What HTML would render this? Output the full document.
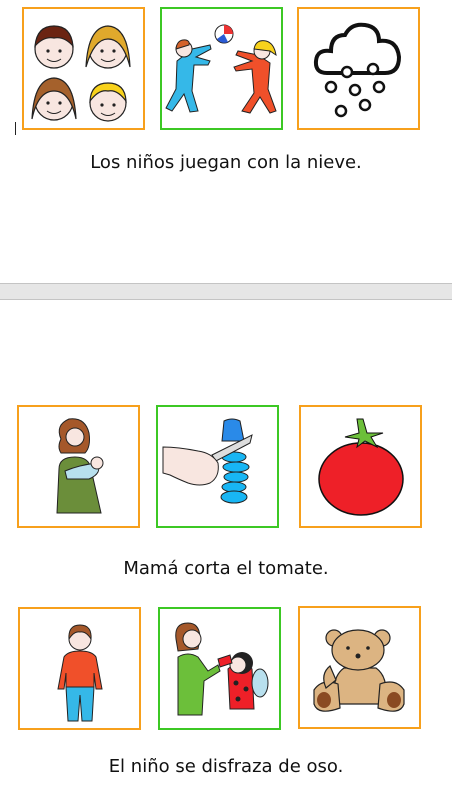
<!DOCTYPE html>
<html><head><meta charset="utf-8"><style>
*{margin:0;padding:0;box-sizing:border-box}
body{width:452px;height:798px;background:#fff;position:relative;overflow:hidden;font-family:"DejaVu Sans","Liberation Sans",sans-serif;color:#111}
.b{position:absolute;width:123px;height:123px;border:2px solid #f7a01c;background:#fff}
.g{border-color:#3cc824}
.b svg{position:absolute;left:0;top:0;width:119px;height:119px}
.t{position:absolute;left:0;width:452px;text-align:center;font-size:18px;line-height:20px}
.band{position:absolute;left:0;top:283px;width:452px;height:17px;background:#e6e6e6;border-top:1px solid #c4c4c4;border-bottom:1px solid #c4c4c4}
</style></head><body>

<div class="b" style="left:22px;top:7px"><svg viewBox="0 0 119 119">
<g stroke="#222" stroke-width="1.2">
<circle cx="30" cy="40" r="19" fill="#f8e6e0"/><path d="M11 37 Q13 17 30 17 Q47 17 49 37 Q40 27 30 29 Q20 27 11 37Z" fill="#6b2412"/>
<circle cx="84" cy="40" r="19" fill="#f8e6e0"/><path d="M62 58 Q64 18 84 17 Q104 18 106 58 Q99 30 84 30 Q70 30 62 58Z" fill="#e0a92c"/>
<circle cx="30" cy="92" r="19" fill="#f8e6e0"/><path d="M8 110 Q10 70 30 69 Q50 70 52 110 Q46 82 30 82 Q14 82 8 110Z" fill="#a5612c"/>
<circle cx="84" cy="94" r="18" fill="#f8e6e0"/><path d="M66 92 Q67 74 84 74 Q101 74 102 92 Q93 80 84 82 Q75 80 66 92Z" fill="#f8d21c"/>
</g>
<g fill="#222"><circle cx="24" cy="42" r="1.6"/><circle cx="36" cy="42" r="1.6"/><circle cx="78" cy="42" r="1.6"/><circle cx="90" cy="42" r="1.6"/><circle cx="24" cy="94" r="1.6"/><circle cx="36" cy="94" r="1.6"/><circle cx="78" cy="96" r="1.6"/><circle cx="90" cy="96" r="1.6"/></g>
<g fill="none" stroke="#222"><path d="M23 50 Q30 55 37 50"/><path d="M77 50 Q84 55 91 50"/><path d="M23 102 Q30 107 37 102"/><path d="M77 104 Q84 109 91 104"/></g>
</svg></div>

<div class="b g" style="left:160px;top:7px"><svg viewBox="0 0 119 119">
<circle cx="62" cy="25" r="9" fill="#fff" stroke="#222"/><path d="M62 16 A9 9 0 0 1 71 25 L62 25Z" fill="#e33"/><path d="M55 30 A9 9 0 0 0 66 33 L62 25Z" fill="#2a5bd6"/>
<g stroke="#222" stroke-width="1">
<path d="M15 52 L30 40 L48 36 L49 40 L34 48 L48 52 L46 56 L32 56 L30 82 L36 102 L28 103 L22 85 L10 102 L4 99 L14 80 Z" fill="#35b8e8"/>
<circle cx="22" cy="40" r="8" fill="#f8e6e0"/><path d="M14 40 Q15 30 24 31 Q28 32 27 36 Z" fill="#d4622a"/>
<path d="M108 54 L96 46 L76 42 L74 46 L90 52 L72 58 L74 62 L90 60 L92 84 L80 102 L88 104 L98 88 L108 104 L114 102 L106 80 Z" fill="#f0502a"/>
<circle cx="100" cy="42" r="8" fill="#f8e6e0"/><path d="M92 40 Q94 30 104 32 Q112 34 114 46 L108 42 Z" fill="#f8d21c"/>
</g></svg></div>

<div class="b" style="left:297px;top:7px"><svg viewBox="0 0 119 119">
<path d="M28 64 Q16 64 17 52 Q18 40 32 42 Q32 26 46 26 Q52 14 66 16 Q80 18 80 32 Q98 30 100 48 Q100 64 86 64 Z" fill="none" stroke="#111" stroke-width="4"/>
<g fill="#fff" stroke="#111" stroke-width="2.5"><circle cx="48" cy="63" r="5"/><circle cx="74" cy="60" r="5"/><circle cx="32" cy="78" r="5"/><circle cx="56" cy="81" r="5"/><circle cx="80" cy="78" r="5"/><circle cx="42" cy="102" r="5"/><circle cx="66" cy="96" r="5"/></g>
</svg></div>
<div style="position:absolute;left:15px;top:122px;width:1px;height:13px;background:#222"></div>

<div class="t" style="top:153px">Los niños juegan con la nieve.</div>
<div class="band"></div>

<div class="b" style="left:17px;top:405px"><svg viewBox="0 0 119 119">
<path d="M42 32 Q36 18 50 12 Q66 10 70 26 Q72 40 66 46 L42 46 Q38 40 42 32Z" fill="#a5582a" stroke="#222"/>
<circle cx="56" cy="30" r="9" fill="#f8e6e0" stroke="#222"/>
<path d="M40 62 Q40 50 56 50 Q70 50 72 62 L82 106 L38 106 Z" fill="#6b8e3a" stroke="#222"/>
<path d="M46 64 Q60 58 78 56 Q84 66 70 72 L48 72Z" fill="#b8e0ee" stroke="#222"/><circle cx="78" cy="56" r="6" fill="#f8e6e0" stroke="#222"/>
</svg></div>

<div class="b g" style="left:156px;top:405px"><svg viewBox="0 0 119 119">
<path d="M64 34 L66 14 Q74 10 82 14 L86 34 Z" fill="#2a8ae8" stroke="#222"/>
<g fill="#18b6f4" stroke="#222"><ellipse cx="76" cy="50" rx="12" ry="5"/><ellipse cx="78" cy="60" rx="13" ry="5"/><ellipse cx="78" cy="70" rx="12" ry="5"/><ellipse cx="76" cy="80" rx="12" ry="5"/><ellipse cx="76" cy="90" rx="13" ry="6"/></g>
<path d="M54 48 L94 28 L92 36 L58 54Z" fill="#ddd" stroke="#222"/>
<path d="M5 40 Q20 40 40 44 Q54 46 60 56 Q62 70 52 76 Q42 80 30 76 Q20 72 12 68 L5 66 Z" fill="#f8e6e0" stroke="#222"/>
</svg></div>

<div class="b" style="left:299px;top:405px"><svg viewBox="0 0 119 119">
<ellipse cx="60" cy="72" rx="42" ry="36" fill="#ee2028" stroke="#111" stroke-width="1.5"/>
<path d="M56 12 L58 26 L44 30 L58 32 L56 40 L64 34 L76 40 L70 30 L82 26 L66 26 L62 12Z" fill="#6cbf3a" stroke="#111"/>
</svg></div>

<div class="t" style="top:559px">Mamá corta el tomate.</div>

<div class="b" style="left:18px;top:607px"><svg viewBox="0 0 119 119">
<circle cx="60" cy="30" r="11" fill="#f8e6e0" stroke="#222"/><path d="M49 30 Q48 16 60 16 Q72 16 71 30 Q66 22 60 23 Q54 22 49 30Z" fill="#a5582a" stroke="#222"/>
<path d="M44 48 Q48 42 60 42 Q72 42 76 48 L82 80 L76 80 L74 64 L74 78 L46 78 L46 64 L44 80 L38 80 Z" fill="#f0502a" stroke="#222"/>
<path d="M46 78 L74 78 L72 112 L62 112 L60 86 L58 112 L48 112 Z" fill="#35b8e8" stroke="#222"/>
</svg></div>

<div class="b g" style="left:158px;top:607px"><svg viewBox="0 0 119 119">
<path d="M16 30 Q14 14 28 14 Q40 14 40 30 L38 40 L18 42Z" fill="#a5582a" stroke="#222"/>
<circle cx="32" cy="30" r="9" fill="#f8e6e0" stroke="#222"/>
<path d="M18 48 Q28 42 38 48 L48 62 L58 56 L60 62 L44 72 L42 106 L18 106 Z" fill="#6cbf3a" stroke="#222"/>
<path d="M68 60 Q80 48 92 60 L94 100 L70 100Z" fill="#ee2028" stroke="#222"/>
<ellipse cx="100" cy="74" rx="8" ry="14" fill="#b8e0ee" stroke="#222"/>
<circle cx="82" cy="54" r="11" fill="#222"/><circle cx="78" cy="56" r="8" fill="#f8e6e0" stroke="#222"/>
<path d="M58 50 L70 46 L72 54 L60 58Z" fill="#ee2028" stroke="#222"/>
<g fill="#222"><circle cx="76" cy="74" r="2.5"/><circle cx="86" cy="80" r="2.5"/><circle cx="78" cy="90" r="2.5"/></g>
</svg></div>

<div class="b" style="left:298px;top:606px"><svg viewBox="0 0 119 119">
<g fill="#dcb482" stroke="#222" stroke-width="1.2">
<circle cx="34" cy="30" r="8"/><circle cx="82" cy="30" r="8"/>
<path d="M44 60 Q30 70 36 96 L84 96 Q90 70 76 60Z"/>
<path d="M14 82 Q22 70 38 76 L40 100 Q18 108 14 96Z"/><path d="M104 82 Q96 70 80 76 L78 100 Q100 108 104 96Z"/>
<ellipse cx="58" cy="42" rx="26" ry="20"/>
<path d="M30 58 Q20 66 26 80 L36 72Z"/>
</g>
<g fill="#8a4a22"><ellipse cx="24" cy="92" rx="7" ry="8"/><ellipse cx="94" cy="92" rx="7" ry="8"/></g>
<g fill="#222"><circle cx="48" cy="40" r="1.8"/><circle cx="68" cy="40" r="1.8"/><circle cx="58" cy="48" r="2.5"/></g>
</svg></div>

<div class="t" style="top:757px">El niño se disfraza de oso.</div>
</body></html>
